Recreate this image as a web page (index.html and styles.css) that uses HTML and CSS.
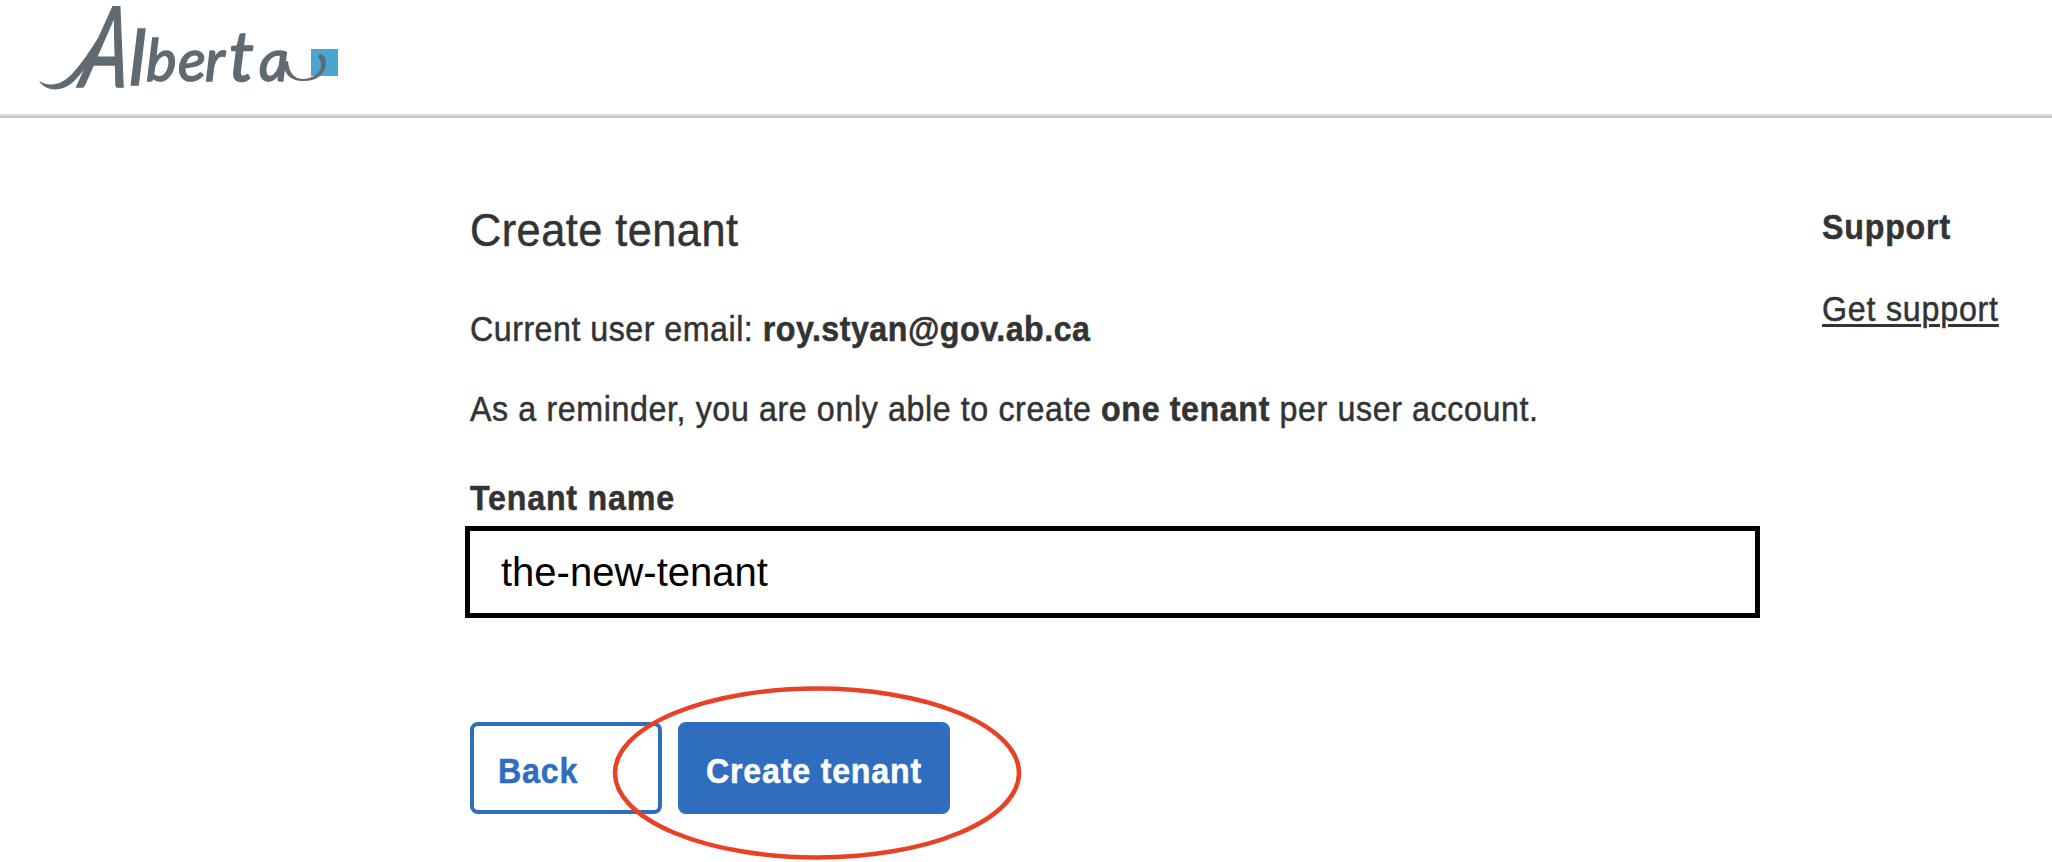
FILE: index.html
```html
<!DOCTYPE html>
<html lang="en">
<head>
<meta charset="utf-8">
<title>Create tenant</title>
<link rel="stylesheet" href="styles.css">
</head>
<body>
<header class="header">
  <svg class="logo" viewBox="0 0 310 96" role="img" aria-label="Alberta">
    <rect class="logo-square" x="272" y="49" width="27" height="27"/>
    <g class="logo-text">
      <text class="logo-cap" transform="translate(40 87) skewX(-7) scale(.67 1)">A</text>
      <text class="logo-tall" x="90" y="85">l</text>
      <text x="107 139 166" y="80.500">ber<tspan class="logo-t" x="190">t</tspan><tspan x="220">a</tspan></text>
    </g>
    <path class="logo-swash" d="M0 81C12 88 23 84 33 74C43 63 51 51 59 38L63 41C54 57 46 70 37 79C26 92 8 93 0 81Z"/>
    <path class="logo-swash" d="M244 62L249 61C250 73 255 79 265 79C275 78 283 72 282 64C282 60 280 58 279 57C279 53 287 52 287 64C286 76 275 82 262 81C251 80 245 74 244 62Z"/>
  </svg>
</header>
<main class="page">
  <section class="content">
    <h1 class="title"><span class="fit">Create tenant</span></h1>
    <p class="text"><span class="fit">Current user email: <b>roy.styan@gov.ab.ca</b></span></p>
    <p class="text"><span class="fit medium">As a reminder, you are only able to create <b>one tenant</b> per user account.</span></p>
    <label class="label" for="tenant"><span class="fit wide">Tenant name</span></label>
    <input class="input" id="tenant" type="text" value="the-new-tenant">
    <div class="actions">
      <button class="button secondary"><span class="fit wide">Back</span></button>
      <div class="callout">
        <button class="button primary"><span class="fit wide">Create tenant</span></button>
        <svg class="ring" viewBox="0 0 410 176"><ellipse cx="205" cy="88" rx="202" ry="84.5"/></svg>
      </div>
    </div>
  </section>
  <aside class="support">
    <h2 class="support-title"><span class="fit wide">Support</span></h2>
    <a class="support-link fit wide" href="#">Get support</a>
  </aside>
</main>
</body>
</html>
```
FILE: styles.css
```css
* { box-sizing: border-box; }
body {
  margin: 0;
  height: 862px;
  overflow: hidden;
  background: #fff;
  color: #333;
  font-family: "Liberation Sans", sans-serif;
  font-size: 35px;
  line-height: 56px;
}
.fit {
  display: inline-block;
  transform: scaleX(.92);
  transform-origin: 0 50%;
  letter-spacing: .54px;
  -webkit-text-stroke: .5px currentColor;
}
.medium { letter-spacing: .66px; }
.wide { letter-spacing: .85px; }
.header {
  height: 118px;
  padding-left: 39px;
  border-bottom: 2px solid #c8c8c8;
  box-shadow: inset 0 -2px #dcdcdc;
}
.logo { display: block; width: 310px; height: 96px; overflow: visible; }
.logo-square { fill: #4aa5d0; }
.logo-text {
  fill: #5f6a72;
  stroke: #5f6a72;
  stroke-width: 1.6;
  font: italic 58px Lato, sans-serif;
}
.logo-cap { font-size: 112px; }
.logo-tall { font-size: 76px; }
.logo-t { font-size: 70px; }
.logo-swash { fill: #5f6a72; }
.page { display: flex; padding: 84px 0 0 470px; }
.content { width: 1286px; }
.title { margin: 0; font-size: 47px; font-weight: 400; line-height: 56px; }
.text { margin: 0 0 24px; white-space: nowrap; }
.title + .text { margin-top: 43px; }
.label { display: block; margin-top: 33px; font-weight: 700; line-height: 56px; }
.input {
  display: block;
  width: 1295px;
  height: 92px;
  margin: 0 0 0 -5px;
  padding: 0 31px;
  border: 5px solid #000;
  outline: 0;
  color: #000;
  font: 40px "Liberation Sans", sans-serif;
}
.actions { display: flex; gap: 16px; margin-top: 104px; }
.button {
  display: block;
  height: 92px;
  border: 4px solid #2f6dbf;
  border-radius: 8px;
  padding: 6px 24px 0;
  background: #fff;
  color: #2f6dbf;
  font: inherit;
  font-weight: 700;
  text-align: left;
  white-space: nowrap;
}
.secondary { width: 192px; }
.primary { width: 272px; background: #2f6dbf; color: #fff; }
.callout { position: relative; }
.ring {
  position: absolute;
  left: -66px;
  top: -37px;
  width: 410px;
  height: 176px;
  fill: none;
  stroke: #e94126;
  stroke-width: 4.5;
}
.support { padding-left: 66px; white-space: nowrap; }
.support-title { margin: -3px 0 26px; font-size: 35px; line-height: 56px; }
.support-link { color: #333; text-underline-offset: 3px; text-decoration-thickness: 3px; }
```
